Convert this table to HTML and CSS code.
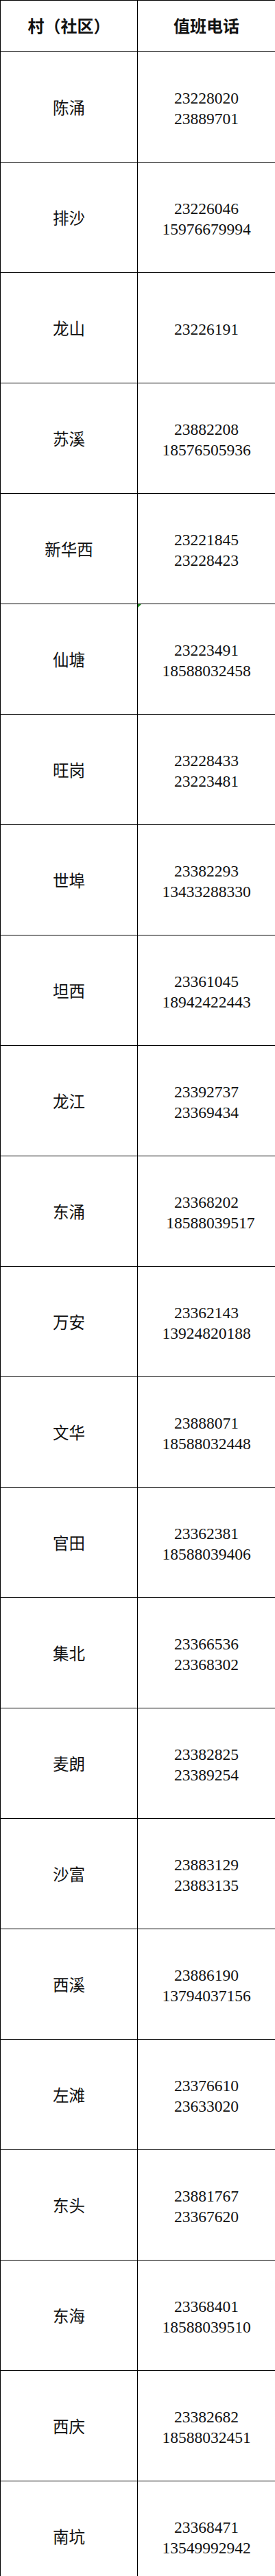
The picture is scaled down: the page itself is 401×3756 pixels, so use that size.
FILE: index.html
```html
<!DOCTYPE html>
<html lang="zh-CN">
<head>
<meta charset="utf-8">
<title>值班电话</title>
<link rel="stylesheet" href="styles.css">
</head>
<body>
<table class="duty">
  <colgroup><col class="col-name"><col class="col-phone"></colgroup>
  <thead>
    <tr class="head-row"><th>村（社区）</th><th>值班电话</th></tr>
  </thead>
  <tbody>
    <tr><td>陈涌</td><td>23228020<br>23889701</td></tr>
    <tr><td>排沙</td><td>23226046<br>15976679994</td></tr>
    <tr><td>龙山</td><td>23226191</td></tr>
    <tr><td>苏溪</td><td>23882208<br>18576505936</td></tr>
    <tr><td>新华西</td><td>23221845<br>23228423</td></tr>
    <tr><td>仙塘</td><td class="flagged"><span class="flag"></span>23223491<br>18588032458</td></tr>
    <tr><td>旺岗</td><td>23228433<br>23223481</td></tr>
    <tr><td>世埠</td><td>23382293<br>13433288330</td></tr>
    <tr><td>坦西</td><td>23361045<br>18942422443</td></tr>
    <tr><td>龙江</td><td>23392737<br>23369434</td></tr>
    <tr><td>东涌</td><td>23368202<br>&nbsp;&nbsp;18588039517</td></tr>
    <tr><td>万安</td><td>23362143<br>13924820188</td></tr>
    <tr><td>文华</td><td>23888071<br>18588032448</td></tr>
    <tr><td>官田</td><td>23362381<br>18588039406</td></tr>
    <tr><td>集北</td><td>23366536<br>23368302</td></tr>
    <tr><td>麦朗</td><td>23382825<br>23389254</td></tr>
    <tr><td>沙富</td><td>23883129<br>23883135</td></tr>
    <tr><td>西溪</td><td>23886190<br>13794037156</td></tr>
    <tr><td>左滩</td><td>23376610<br>23633020</td></tr>
    <tr><td>东头</td><td>23881767<br>23367620</td></tr>
    <tr><td>东海</td><td>23368401<br>18588039510</td></tr>
    <tr><td>西庆</td><td>23382682<br>18588032451</td></tr>
    <tr><td>南坑</td><td>23368471<br>13549992942</td></tr>
  </tbody>
</table>
</body>
</html>
```
FILE: styles.css
```css
html, body {
  margin: 0;
  padding: 0;
  background: #ffffff;
}

.duty {
  border-collapse: collapse;
  table-layout: fixed;
  width: 401px;
  font-family: "Liberation Serif", "Noto Sans CJK SC", serif;
  color: #111111;
}

.col-name { width: 200px; }
.col-phone { width: 201px; }

.duty th,
.duty td {
  border: 1px solid #000000;
  padding: 0;
  text-align: center;
  vertical-align: middle;
}

.duty th {
  height: 72px;
  font-size: 24px;
  font-weight: bold;
  line-height: 30px;
  padding-top: 2px;
}

.duty td {
  height: 157px;
  font-size: 23.5px;
  line-height: 30px;
  padding-top: 3px;
}

.flagged {
  position: relative;
}

.flag {
  position: absolute;
  left: 0;
  top: 0;
  width: 0;
  height: 0;
  border-top: 5px solid #1e8a1e;
  border-right: 5px solid transparent;
}
```
